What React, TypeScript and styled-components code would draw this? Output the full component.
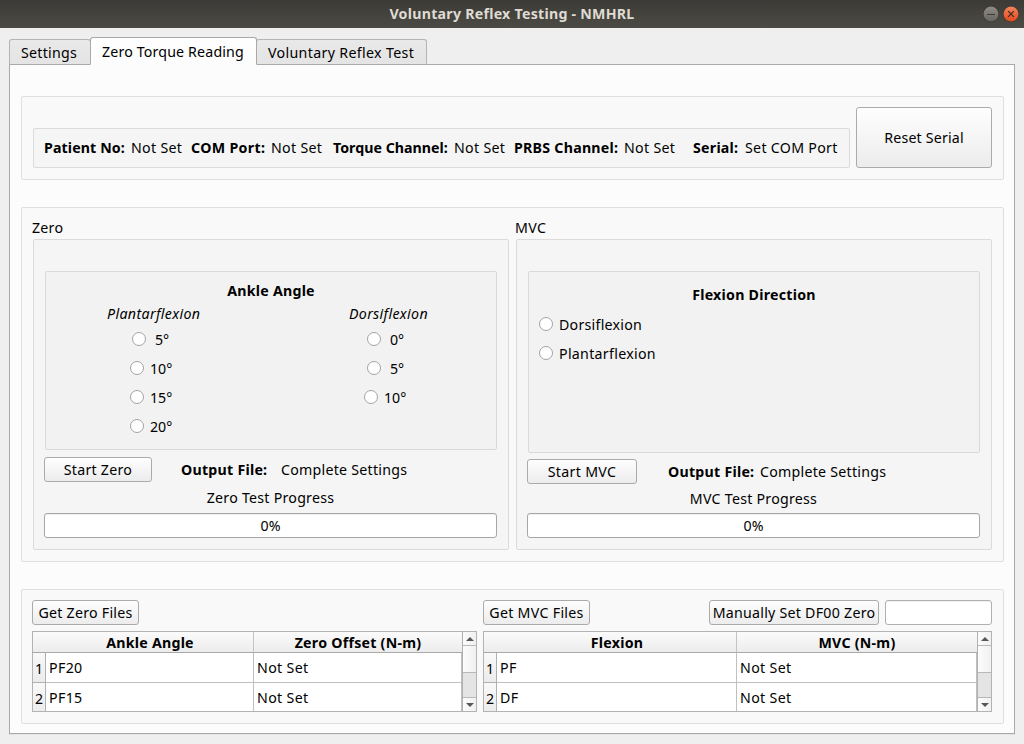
import React from "react";
import styled, { createGlobalStyle } from "styled-components";

const Global = createGlobalStyle`
  * { box-sizing: border-box; }
  body {
    margin: 0;
    background: #efefef;
    color: #000;
    font-family: "Noto Sans", "Open Sans", sans-serif;
    font-size: 14.2px;
    line-height: 20px;
  }
  button, input { font: inherit; color: inherit; }
`;

const Window = styled.div`
  width: 1024px;
  height: 744px;
  overflow: hidden;
  display: flex;
  flex-direction: column;
`;

const TitleBar = styled.header`
  height: 28px;
  flex: none;
  display: grid;
  grid-template-columns: 1fr auto 1fr;
  align-items: center;
  padding-right: 5px;
  padding-left: 5px;
  background: linear-gradient(#3b3a36, #4d4b45);
  color: #dfdbd2;
  font-weight: 700;
`;

const WindowButtons = styled.div`
  grid-column: 3;
  justify-self: end;
  display: flex;
  gap: 4px;
`;

const Text = styled.span<{ $ls?: number; $bold?: boolean; $italic?: boolean }>`
  white-space: nowrap;
  letter-spacing: ${(p) => p.$ls ?? 0.25}px;
  font-weight: ${(p) => (p.$bold ? 700 : 400)};
  font-style: ${(p) => (p.$italic ? "italic" : "normal")};
`;

const Tabs = styled.nav`
  height: 37px;
  flex: none;
  padding-left: 9px;
  display: flex;
  align-items: flex-end;
  z-index: 1;
`;

const Tab = styled.div<{ $w: number; $active?: boolean }>`
  width: ${(p) => p.$w}px;
  height: ${(p) => (p.$active ? 28 : 26)}px;
  margin: 0 ${(p) => (p.$active ? -1 : 0)}px 0 ${(p) => (p.$active ? -1 : 0)}px;
  z-index: ${(p) => (p.$active ? 1 : 0)};
  padding: ${(p) => (p.$active ? 4 : 3)}px 0 0 11px;
  border: 1px solid ${(p) => (p.$active ? "#a9a9a9" : "#b4b4b4")};
  border-bottom-color: ${(p) => (p.$active ? "#fcfcfc" : "#a9a9a9")};
  border-radius: 3px 3px 0 0;
  background: ${(p) => (p.$active ? "linear-gradient(#fff, #fcfcfc)" : "linear-gradient(#e9e9e9, #e4e4e4)")};
`;

const Pane = styled.main`
  width: 1006px;
  height: 670px;
  margin: -1px 0 0 9px;
  border: 1px solid #a9a9a9;
  background: #fcfcfc;
  padding: 31px 10px 0 11px;
  display: flex;
  flex-direction: column;
  box-shadow: 0 1px 0 #e4e4e4;
`;

const Group = styled.section<{ $h: number; $depth?: number }>`
  height: ${(p) => p.$h}px;
  flex: none;
  border: 1px solid ${(p) => ["#dfdfdf", "#dbdbdb", "#d9d9d9"][p.$depth ?? 0]};
  border-radius: 2px;
  background: ${(p) => ["#f9f9f9", "#f5f5f5", "#f2f2f2"][p.$depth ?? 0]};
`;

const StatusGroup = styled(Group)`
  display: flex;
  padding: 10px 11px 0 11px;
  margin-bottom: 27px;
`;

const StatusBox = styled(Group)`
  width: 817px;
  margin: 21px 6px 0 0;
  display: grid;
  grid-template-columns: 87px 60px 80px 62px 121px 60px 110px 69px 52px 1fr;
  align-items: center;
  padding-left: 10px;
  padding-bottom: 1px;
`;

const Button = styled.button<{ $w: number; $h?: number }>`
  width: ${(p) => p.$w}px;
  height: ${(p) => p.$h ?? 25}px;
  flex: none;
  padding: 0;
  border: 1px solid #ababab;
  border-radius: 3px;
  background: linear-gradient(#fefefe, #ececec);
  line-height: 20px;
  display: flex;
  align-items: center;
  justify-content: center;
`;

const TestsGroup = styled(Group)`
  display: grid;
  grid-template-columns: 476px 476px;
  column-gap: 7px;
  padding: 10px 0 0 11px;
  margin-bottom: 27px;
`;

const TestTitle = styled.h2`
  margin: 0 0 1px -1px;
  height: 20px;
  font-size: inherit;
  font-weight: 400;
`;

const TestPanel = styled(Group)`
  padding: 31px 11px 0 10px;
  display: flex;
  flex-direction: column;
`;

const AngleBox = styled(Group)`
  margin-left: 1px;
  display: grid;
  grid-template-columns: 235px 1fr;
  grid-template-rows: 20px 23px;
  padding-top: 9px;
`;

const BoxTitle = styled.div`
  grid-column: 1 / -1;
  text-align: center;
`;

const ColumnTitle = styled.div<{ $x: number }>`
  padding-left: ${(p) => p.$x}px;
  padding-top: 3px;
`;

const RadioList = styled.div<{ $x: number; $top: number }>`
  padding-left: ${(p) => p.$x}px;
  padding-top: ${(p) => p.$top}px;
`;

const RadioRow = styled.label<{ $indent?: number; $gap: number }>`
  height: 29px;
  padding-left: ${(p) => p.$indent ?? 0}px;
  display: flex;
  align-items: center;
  gap: ${(p) => p.$gap}px;
`;

const Dot = styled.span`
  width: 14px;
  height: 14px;
  flex: none;
  margin-bottom: 1px;
  border: 1px solid #a3a3a3;
  border-radius: 50%;
  background: #fff;
`;

const FlexionBox = styled(Group)`
  margin-left: 1px;
  padding-top: 13px;
`;

const ActionRow = styled.div<{ $top: number; $cols: string }>`
  margin-top: ${(p) => p.$top}px;
  height: 25px;
  display: grid;
  grid-template-columns: ${(p) => p.$cols};
  align-items: center;
`;

const ProgressTitle = styled.div<{ $top: number }>`
  margin-top: ${(p) => p.$top}px;
  height: 20px;
  text-align: center;
`;

const Progress = styled.div<{ $top: number }>`
  margin-top: ${(p) => p.$top}px;
  height: 25px;
  border: 1px solid #a6a6a6;
  border-radius: 3px;
  background: #fff;
  box-shadow: inset 0 1px 0 #f0f0f0;
  line-height: 24px;
  text-align: center;
`;

const FilesGroup = styled(Group)`
  display: grid;
  grid-template-columns: 445px 509px;
  grid-template-rows: 25px 81px;
  gap: 6px;
  padding: 10px 0 0 10px;
`;

const Toolbar = styled.div`
  display: flex;
  gap: 6px;
`;

const Spacer = styled.div`
  flex: 1;
`;

const Field = styled.input`
  width: 107px;
  height: 25px;
  border: 1px solid #b0b0b0;
  border-radius: 3px;
  background: #fff;
  box-shadow: inset 0 1px 0 #f0f0f0;
`;

const TableFrame = styled.div`
  border: 1px solid #b3b3b3;
  background: #fff;
  display: grid;
  grid-template-columns: 1fr 14px;
  overflow: hidden;
`;

const Grid = styled.div<{ $a: number }>`
  display: grid;
  grid-template-columns: 13px ${(p) => p.$a}px 1fr;
  grid-template-rows: 21px 30px 28px;
`;

const HeadCell = styled.div<{ $first?: boolean }>`
  grid-column: ${(p) => (p.$first ? "1 / 3" : "3")};
  padding-left: ${(p) => (p.$first ? 14 : 0)}px;
  border-right: ${(p) => (p.$first ? "1px solid #c3c3c3" : "0")};
  border-bottom: 1px solid #a9a9a9;
  background: linear-gradient(#fbfbfb, #ececec);
  line-height: 22px;
  text-align: center;
`;

const RowHead = styled.div`
  border-right: 1px solid #b0b0b0;
  border-bottom: 1px solid #b0b0b0;
  background: linear-gradient(#f9f9f9, #ececec);
  padding: 6px 0 0 2px;
  &:nth-last-child(3) { border-bottom: 0; }
`;

const Cell = styled.div`
  border-right: 1px solid #c0c0c0;
  border-bottom: 1px solid #c0c0c0;
  padding: 5px 0 0 3px;
  &:nth-last-child(-n + 2) { border-bottom: 0; }
`;

const ScrollBar = styled.div`
  display: grid;
  grid-template-rows: 14px 27px 24px 14px;
  border-left: 1px solid #b0b0b0;
  background: #e4e4e4;
`;

const ScrollPart = styled.div<{ $edge?: "top" | "bottom" }>`
  background: linear-gradient(90deg, #fcfcfc, #f0f0f0);
  border-top: ${(p) => (p.$edge === "top" ? "1px solid #b8b8b8" : "0")};
  border-bottom: ${(p) => (p.$edge === "bottom" ? "1px solid #b8b8b8" : "0")};
  display: flex;
  align-items: center;
  justify-content: center;
`;

const Arrow = ({ down }: { down?: boolean }) => (
  <svg width="8" height="4" viewBox="0 0 8 4">
    <path d={down ? "M0 0H8L4 4Z" : "M0 4H8L4 0Z"} fill="#565656" />
  </svg>
);

const WindowButton = ({ close }: { close?: boolean }) => {
  const id = close ? "close" : "minimise";
  return (
    <svg width="16" height="18" viewBox="0 0 16 18">
      <defs>
        <linearGradient id={id} x1="0" y1="0" x2="0" y2="1">
          <stop offset="0" stopColor={close ? "#f4835d" : "#8f8c85"} />
          <stop offset="1" stopColor={close ? "#e0491b" : "#67655f"} />
        </linearGradient>
      </defs>
      <circle cx="8" cy="9" r="8" fill="#33322e" />
      <circle cx="8" cy="9" r="7.5" fill={`url(#${id})`} />
      {close ? (
        <path d="M5.2 6.2L10.8 11.8M10.8 6.2L5.2 11.8" stroke="#3b2a20" strokeWidth="1.2" />
      ) : (
        <path d="M4 9.5H12" stroke="#3b3a36" strokeWidth="1" />
      )}
    </svg>
  );
};

type Radio = { label: string; indent?: number; gap: number; ls?: number };

const plantar: Radio[] = [
  { label: "5°", indent: 2, gap: 9, ls: 0 },
  { label: "10°", gap: 6, ls: 0 },
  { label: "15°", gap: 6, ls: 0 },
  { label: "20°", gap: 6, ls: 0 },
];
const dorsi: Radio[] = [
  { label: "0°", indent: 3, gap: 9, ls: 0 },
  { label: "5°", indent: 3, gap: 9, ls: 0 },
  { label: "10°", gap: 6, ls: 0 },
];
const flexion: Radio[] = [
  { label: "Dorsiflexion", gap: 6 },
  { label: "Plantarflexion", gap: 6, ls: 0.3 },
];

const Radios = ({ x, top, items }: { x: number; top: number; items: Radio[] }) => (
  <RadioList $x={x} $top={top}>
    {items.map((r) => (
      <RadioRow key={r.label} $indent={r.indent} $gap={r.gap}>
        <Dot />
        <Text $ls={r.ls}>{r.label}</Text>
      </RadioRow>
    ))}
  </RadioList>
);

const Table = ({ a, heads, rows }: { a: number; heads: [string, string]; rows: string[] }) => (
  <TableFrame>
    <Grid $a={a}>
      <HeadCell $first><Text $bold>{heads[0]}</Text></HeadCell>
      <HeadCell><Text $bold>{heads[1]}</Text></HeadCell>
      {rows.map((r, i) => (
        <React.Fragment key={r}>
          <RowHead>{i + 1}</RowHead>
          <Cell><Text $ls={0.35}>{r}</Text></Cell>
          <Cell><Text $ls={0.35}>Not Set</Text></Cell>
        </React.Fragment>
      ))}
    </Grid>
    <ScrollBar>
      <ScrollPart $edge="bottom"><Arrow /></ScrollPart>
      <ScrollPart $edge="bottom" />
      <div />
      <ScrollPart $edge="top"><Arrow down /></ScrollPart>
    </ScrollBar>
  </TableFrame>
);

const status: { name: string; value: string; ls: number }[] = [
  { name: "Patient No:", value: "Not Set", ls: 0.12 },
  { name: "COM Port:", value: "Not Set", ls: 0.33 },
  { name: "Torque Channel:", value: "Not Set", ls: 0.03 },
  { name: "PRBS Channel:", value: "Not Set", ls: 0.25 },
  { name: "Serial:", value: "Set COM Port", ls: 0.25 },
];

export default function App() {
  return (
    <>
      <Global />
      <Window>
        <TitleBar>
          <span />
          <Text $bold>Voluntary Reflex Testing - NMHRL</Text>
          <WindowButtons>
            <WindowButton />
            <WindowButton close />
          </WindowButtons>
        </TitleBar>
        <Tabs>
          <Tab $w={82}><Text>Settings</Text></Tab>
          <Tab $w={167} $active><Text $ls={0.16}>Zero Torque Reading</Text></Tab>
          <Tab $w={171}><Text $ls={0.34}>Voluntary Reflex Test</Text></Tab>
        </Tabs>
        <Pane>
          <StatusGroup $h={84}>
            <StatusBox $h={40} $depth={1}>
              {status.map((s) => (
                <React.Fragment key={s.name}>
                  <Text $bold $ls={s.ls}>{s.name}</Text>
                  <Text $ls={0.3}>{s.value}</Text>
                </React.Fragment>
              ))}
            </StatusBox>
            <Button $w={136} $h={61}><Text $ls={0.18}>Reset Serial</Text></Button>
          </StatusGroup>

          <TestsGroup $h={355}>
            <div>
              <TestTitle><Text>Zero</Text></TestTitle>
              <TestPanel $h={311} $depth={1}>
                <AngleBox $h={179} $depth={2}>
                  <BoxTitle><Text $bold>Ankle Angle</Text></BoxTitle>
                  <ColumnTitle $x={61}><Text $italic $ls={0.36}>Plantarflexion</Text></ColumnTitle>
                  <ColumnTitle $x={68}><Text $italic $ls={0.34}>Dorsiflexion</Text></ColumnTitle>
                  <Radios x={84} top={1} items={plantar} />
                  <Radios x={83} top={1} items={dorsi} />
                </AngleBox>
                <ActionRow $top={7} $cols="137px 100px 1fr">
                  <Button $w={108}><Text>Start Zero</Text></Button>
                  <Text $bold>Output File:</Text>
                  <Text>Complete Settings</Text>
                </ActionRow>
                <ProgressTitle $top={6}><Text>Zero Test Progress</Text></ProgressTitle>
                <Progress $top={5}>0%</Progress>
              </TestPanel>
            </div>
            <div>
              <TestTitle><Text $ls={0.4}>MVC</Text></TestTitle>
              <TestPanel $h={311} $depth={1}>
                <FlexionBox $h={182} $depth={2}>
                  <BoxTitle><Text $bold>Flexion Direction</Text></BoxTitle>
                  <Radios x={10} top={5} items={flexion} />
                </FlexionBox>
                <ActionRow $top={6} $cols="141px 92px 1fr">
                  <Button $w={110}><Text $ls={0.33}>Start MVC</Text></Button>
                  <Text $bold>Output File:</Text>
                  <Text>Complete Settings</Text>
                </ActionRow>
                <ProgressTitle $top={5}><Text>MVC Test Progress</Text></ProgressTitle>
                <Progress $top={4}>0%</Progress>
              </TestPanel>
            </div>
          </TestsGroup>

          <FilesGroup $h={135}>
            <Toolbar>
              <Button $w={107}><Text>Get Zero Files</Text></Button>
            </Toolbar>
            <Toolbar>
              <Button $w={107}><Text $ls={0.3}>Get MVC Files</Text></Button>
              <Spacer />
              <Button $w={170}><Text>Manually Set DF00 Zero</Text></Button>
              <Field />
            </Toolbar>
            <Table a={208} heads={["Ankle Angle", "Zero Offset (N-m)"]} rows={["PF20", "PF15"]} />
            <Table a={240} heads={["Flexion", "MVC (N-m)"]} rows={["PF", "DF"]} />
          </FilesGroup>
        </Pane>
      </Window>
    </>
  );
}
